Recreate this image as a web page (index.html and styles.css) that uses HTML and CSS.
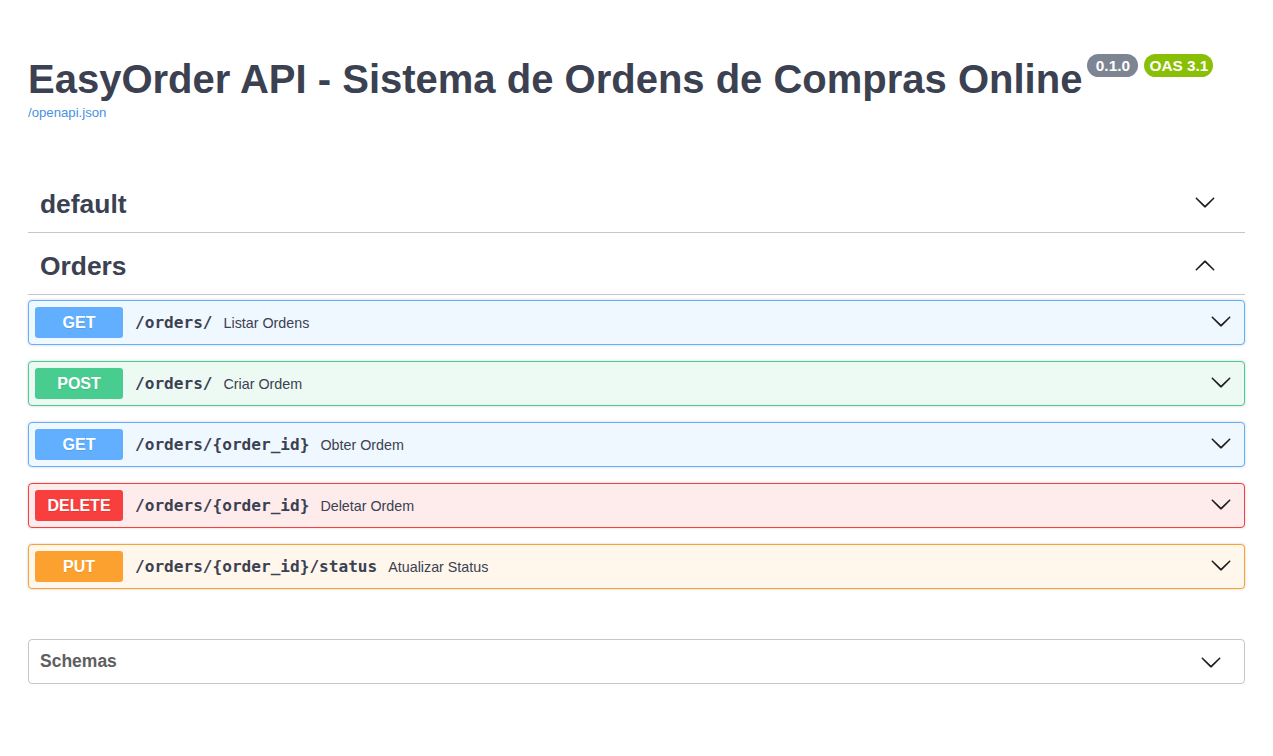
FILE: index.html
```html
<!DOCTYPE html>
<html lang="pt">
<head>
<meta charset="utf-8">
<title>EasyOrder API - Swagger UI</title>
<link rel="stylesheet" href="styles.css">
</head>
<body>
<div class="page">
  <header class="info">
    <h2 class="title">
      <span class="title-text">EasyOrder API - Sistema de Ordens de Compras Online</span>
      <span class="badge badge-version">0.1.0</span>
      <span class="badge badge-oas">OAS 3.1</span>
    </h2>
    <a class="spec-link" href="#">/openapi.json</a>
  </header>

  <section class="tags">
    <div class="tag">
      <h3 class="tag-head">
        <span class="tag-name">default</span>
        <svg class="chev chev-tag" viewBox="0 0 20 20"><path d="M17.418 6.109c.272-.268.709-.268.979 0s.271.701 0 .969l-7.908 7.83c-.27.268-.707.268-.979 0l-7.908-7.83c-.27-.268-.27-.701 0-.969.271-.268.709-.268.979 0L10 13.25l7.418-7.141z"/></svg>
      </h3>
    </div>

    <div class="tag">
      <h3 class="tag-head">
        <span class="tag-name">Orders</span>
        <svg class="chev chev-tag chev-up" viewBox="0 0 20 20"><path transform="rotate(180 10 10)" d="M17.418 6.109c.272-.268.709-.268.979 0s.271.701 0 .969l-7.908 7.83c-.27.268-.707.268-.979 0l-7.908-7.83c-.27-.268-.27-.701 0-.969.271-.268.709-.268.979 0L10 13.25l7.418-7.141z"/></svg>
      </h3>

      <div class="ops">
        <div class="opblock op-get">
          <span class="method">GET</span>
          <span class="path">/orders/</span>
          <span class="desc">Listar Ordens</span>
          <svg class="chev chev-op" viewBox="0 0 20 20"><path d="M17.418 6.109c.272-.268.709-.268.979 0s.271.701 0 .969l-7.908 7.83c-.27.268-.707.268-.979 0l-7.908-7.83c-.27-.268-.27-.701 0-.969.271-.268.709-.268.979 0L10 13.25l7.418-7.141z"/></svg>
        </div>
        <div class="opblock op-post">
          <span class="method">POST</span>
          <span class="path">/orders/</span>
          <span class="desc">Criar Ordem</span>
          <svg class="chev chev-op" viewBox="0 0 20 20"><path d="M17.418 6.109c.272-.268.709-.268.979 0s.271.701 0 .969l-7.908 7.83c-.27.268-.707.268-.979 0l-7.908-7.83c-.27-.268-.27-.701 0-.969.271-.268.709-.268.979 0L10 13.25l7.418-7.141z"/></svg>
        </div>
        <div class="opblock op-get">
          <span class="method">GET</span>
          <span class="path">/orders/{order_id}</span>
          <span class="desc">Obter Ordem</span>
          <svg class="chev chev-op" viewBox="0 0 20 20"><path d="M17.418 6.109c.272-.268.709-.268.979 0s.271.701 0 .969l-7.908 7.83c-.27.268-.707.268-.979 0l-7.908-7.83c-.27-.268-.27-.701 0-.969.271-.268.709-.268.979 0L10 13.25l7.418-7.141z"/></svg>
        </div>
        <div class="opblock op-delete">
          <span class="method">DELETE</span>
          <span class="path">/orders/{order_id}</span>
          <span class="desc">Deletar Ordem</span>
          <svg class="chev chev-op" viewBox="0 0 20 20"><path d="M17.418 6.109c.272-.268.709-.268.979 0s.271.701 0 .969l-7.908 7.83c-.27.268-.707.268-.979 0l-7.908-7.83c-.27-.268-.27-.701 0-.969.271-.268.709-.268.979 0L10 13.25l7.418-7.141z"/></svg>
        </div>
        <div class="opblock op-put">
          <span class="method">PUT</span>
          <span class="path">/orders/{order_id}/status</span>
          <span class="desc">Atualizar Status</span>
          <svg class="chev chev-op" viewBox="0 0 20 20"><path d="M17.418 6.109c.272-.268.709-.268.979 0s.271.701 0 .969l-7.908 7.83c-.27.268-.707.268-.979 0l-7.908-7.83c-.27-.268-.27-.701 0-.969.271-.268.709-.268.979 0L10 13.25l7.418-7.141z"/></svg>
        </div>
      </div>
    </div>
  </section>

  <section class="models">
    <h4 class="models-title">Schemas</h4>
    <svg class="chev chev-models" viewBox="0 0 20 20"><path d="M17.418 6.109c.272-.268.709-.268.979 0s.271.701 0 .969l-7.908 7.83c-.27.268-.707.268-.979 0l-7.908-7.83c-.27-.268-.27-.701 0-.969.271-.268.709-.268.979 0L10 13.25l7.418-7.141z"/></svg>
  </section>
</div>
</body>
</html>
```

FILE: styles.css
```css
html, body {
  margin: 0;
  padding: 0;
  background: #ffffff;
}

body {
  font-family: "Liberation Sans", Arial, sans-serif;
  color: #3b4151;
}

.page {
  padding: 55px 28px 40px;
}

/* ---------- info ---------- */
.info {
  display: flex;
  flex-direction: column;
  align-items: flex-start;
}

.title {
  margin: 0;
  display: flex;
  align-items: flex-start;
  font-size: 40px;
  font-weight: 700;
  line-height: 48px;
  color: #3b4151;
}

.title-text {
  display: block;
}

.badge {
  display: inline-flex;
  align-items: center;
  justify-content: center;
  height: 23px;
  margin-top: -1px;
  border-radius: 57px;
  color: #ffffff;
  font-size: 15.4px;
  font-weight: 700;
  line-height: 23px;
  box-sizing: border-box;
}

.badge-version {
  width: 51px;
  margin-left: 5px;
  background: #7d8492;
}

.badge-oas {
  width: 69px;
  margin-left: 6px;
  background: #89bf04;
}

.spec-link {
  display: block;
  margin-top: 2px;
  font-size: 13.2px;
  line-height: 16px;
  color: #4990e2;
  text-decoration: none;
}

/* ---------- tags ---------- */
.tags {
  margin-top: 55px;
}

.tag-head {
  margin: 0 0 5px;
  height: 57px;
  box-sizing: border-box;
  padding: 0 29px 0 12px;
  display: flex;
  align-items: center;
  justify-content: space-between;
  border-bottom: 1px solid rgba(59, 65, 81, 0.3);
  font-size: 26.4px;
  font-weight: 700;
  color: #3b4151;
}

.chev {
  width: 22px;
  height: 22px;
  fill: #1c1c1c;
  flex: none;
}

.chev-tag {
  margin-bottom: 4px;
}

.chev-up {
  margin-bottom: 0;
}

/* ---------- operations ---------- */
.ops {
  display: flex;
  flex-direction: column;
  gap: 16px;
}

.opblock {
  height: 45px;
  box-sizing: border-box;
  border: 1px solid;
  border-radius: 4px;
  box-shadow: 0 0 3px rgba(0, 0, 0, 0.19);
  padding: 0 6px;
  display: flex;
  align-items: center;
}

.method {
  flex: none;
  width: 88px;
  height: 31px;
  border-radius: 3px;
  display: flex;
  align-items: center;
  justify-content: center;
  color: #ffffff;
  font-size: 16px;
  font-weight: 700;
  text-shadow: 0 1px 0 rgba(0, 0, 0, 0.1);
}

.path {
  flex: none;
  padding: 0 11px 0 12px;
  font-family: "DejaVu Sans Mono", monospace;
  font-size: 16.1px;
  font-weight: 700;
  color: #3b4151;
}

.desc {
  flex: 1;
  font-size: 14.3px;
  color: #3b4151;
}

.chev-op {
  margin-right: 6px;
  margin-bottom: 3px;
}

.op-get {
  background: #eff7ff;
  border-color: #61affe;
}
.op-get .method { background: #61affe; }

.op-post {
  background: #edfaf4;
  border-color: #49cc90;
}
.op-post .method { background: #49cc90; }

.op-delete {
  background: #feecec;
  border-color: #f93e3e;
}
.op-delete .method { background: #f93e3e; }

.op-put {
  background: #fff6ec;
  border-color: #fca130;
}
.op-put .method { background: #fca130; }

/* ---------- models ---------- */
.models {
  margin-top: 50px;
  height: 45px;
  box-sizing: border-box;
  border: 1px solid rgba(59, 65, 81, 0.3);
  border-radius: 4px;
  padding: 0 22px 0 11px;
  display: flex;
  align-items: center;
  justify-content: space-between;
}

.models-title {
  margin: 0;
  font-size: 17.5px;
  font-weight: 700;
  color: #606060;
}
```
